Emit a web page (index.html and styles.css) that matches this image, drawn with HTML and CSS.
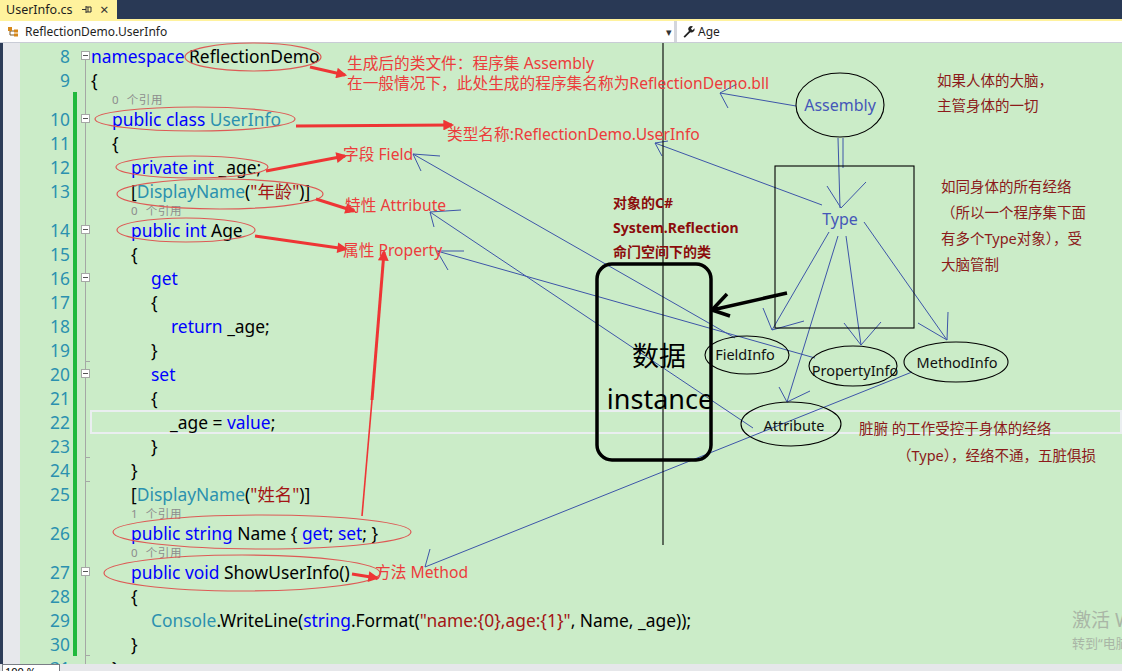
FILE: index.html
```html
<!DOCTYPE html>
<html lang="zh">
<head>
<meta charset="utf-8">
<title>UserInfo.cs</title>
<link rel="stylesheet" href="styles.css">
</head>
<body>
<div class="tabbar">
  <div class="tab">
    <span class="tabname">UserInfo.cs</span>
    <svg class="pin" width="11" height="9" viewBox="0 0 11 9"><path d="M0 4.5H4M4 1V8M4 2H9V7H4M6 2V7" fill="none" stroke="#333" stroke-width="1"/></svg>
    <span class="close">×</span>
  </div>
</div>
<div class="tabline"></div>
<div class="navbar">
  <div class="combo left">
    <svg class="clsicon" width="14" height="12" viewBox="0 0 14 12"><path d="M3 3V9H8M3 5H8" fill="none" stroke="#7a5a2a" stroke-width="1"/><rect x="1" y="1" width="4" height="4" fill="#d5871b"/><rect x="7" y="3.5" width="4" height="3" fill="#d5871b"/><rect x="7" y="7.5" width="4" height="3" fill="#d5871b"/></svg>
    <span class="combotext">ReflectionDemo.UserInfo</span>
    <span class="drop">▾</span>
  </div>
  <div class="combo right">
    <svg class="wrench" width="13" height="13" viewBox="0 0 13 13"><path d="M1.5 11.5L7 6A3 3 0 0 1 11 1.6L9 3.6L9.6 4.6L10.6 5.2L12.4 3.3A3.2 3.2 0 0 1 8.3 7.3L2.8 12.8Z" fill="#222"/></svg>
    <span class="combotext">Age</span>
  </div>
</div>

<div class="editor">
  <div class="strip"></div>
  <div class="glyphs"></div>
  <div class="lines">
    <div class="ln"><span class="num">8</span><span class="chg"></span><span class="ol first"><i class="box"></i></span><span class="code i0"><b class="kw">namespace</b> ReflectionDemo</span></div>
    <div class="ln"><span class="num">9</span><span class="chg"></span><span class="ol"></span><span class="code i0">{</span></div>
    <div class="lens"><span class="num"></span><span class="chg on"></span><span class="ol"></span><span class="code i1">0 个引用</span></div>
    <div class="ln"><span class="num">10</span><span class="chg on"></span><span class="ol"><i class="box"></i></span><span class="code i1"><b class="kw">public class</b> <b class="ty">UserInfo</b></span></div>
    <div class="ln"><span class="num">11</span><span class="chg on"></span><span class="ol"></span><span class="code i1">{</span></div>
    <div class="ln"><span class="num">12</span><span class="chg on"></span><span class="ol"></span><span class="code i2"><b class="kw">private int</b> _age;</span></div>
    <div class="ln"><span class="num">13</span><span class="chg on"></span><span class="ol"></span><span class="code i2">[<b class="ty">DisplayName</b>(<b class="st">"年龄"</b>)]</span></div>
    <div class="lens"><span class="num"></span><span class="chg on"></span><span class="ol"></span><span class="code i2">0 个引用</span></div>
    <div class="ln"><span class="num">14</span><span class="chg on"></span><span class="ol"><i class="box"></i></span><span class="code i2"><b class="kw">public int</b> Age</span></div>
    <div class="ln"><span class="num">15</span><span class="chg on"></span><span class="ol"></span><span class="code i2">{</span></div>
    <div class="ln"><span class="num">16</span><span class="chg on"></span><span class="ol"><i class="box"></i></span><span class="code i3"><b class="kw">get</b></span></div>
    <div class="ln"><span class="num">17</span><span class="chg on"></span><span class="ol"></span><span class="code i3">{</span></div>
    <div class="ln"><span class="num">18</span><span class="chg on"></span><span class="ol"></span><span class="code i4"><b class="kw">return</b> _age;</span></div>
    <div class="ln"><span class="num">19</span><span class="chg on"></span><span class="ol end"></span><span class="code i3">}</span></div>
    <div class="ln"><span class="num">20</span><span class="chg on"></span><span class="ol"><i class="box"></i></span><span class="code i3"><b class="kw">set</b></span></div>
    <div class="ln"><span class="num">21</span><span class="chg on"></span><span class="ol"></span><span class="code i3">{</span></div>
    <div class="ln cur"><span class="num">22</span><span class="chg on"></span><span class="ol"></span><span class="code i4">_age = <b class="kw">value</b>;</span></div>
    <div class="ln"><span class="num">23</span><span class="chg on"></span><span class="ol end"></span><span class="code i3">}</span></div>
    <div class="ln"><span class="num">24</span><span class="chg on"></span><span class="ol end"></span><span class="code i2">}</span></div>
    <div class="ln"><span class="num">25</span><span class="chg on"></span><span class="ol"></span><span class="code i2">[<b class="ty">DisplayName</b>(<b class="st">"姓名"</b>)]</span></div>
    <div class="lens"><span class="num"></span><span class="chg on"></span><span class="ol"></span><span class="code i2">1 个引用</span></div>
    <div class="ln"><span class="num">26</span><span class="chg on"></span><span class="ol"></span><span class="code i2"><b class="kw">public string</b> Name { <b class="kw">get</b>; <b class="kw">set</b>; }</span></div>
    <div class="lens"><span class="num"></span><span class="chg on"></span><span class="ol"></span><span class="code i2">0 个引用</span></div>
    <div class="ln"><span class="num">27</span><span class="chg on"></span><span class="ol"><i class="box"></i></span><span class="code i2"><b class="kw">public void</b> ShowUserInfo()</span></div>
    <div class="ln"><span class="num">28</span><span class="chg on"></span><span class="ol"></span><span class="code i2">{</span></div>
    <div class="ln"><span class="num">29</span><span class="chg on"></span><span class="ol"></span><span class="code i3"><b class="ty">Console</b>.WriteLine(<b class="kw">string</b>.Format(<b class="st">"name:{0},age:{1}"</b>, Name, _age));</span></div>
    <div class="ln"><span class="num">30</span><span class="chg on"></span><span class="ol end"></span><span class="code i2">}</span></div>
    <div class="ln"><span class="num">31</span><span class="chg"></span><span class="ol"></span><span class="code i1">}</span></div>
  </div>
</div>

<div class="statusbar"><span class="zoombox">100 %</span></div>

<svg class="overlay" width="1122" height="671" viewBox="0 0 1122 671">
  <defs>
    <marker id="rh" viewBox="0 0 10 10" refX="8" refY="5" markerWidth="4" markerHeight="3.6" orient="auto"><path d="M0,0 L10,5 L0,10 z" fill="#ee3535"/></marker>
  </defs>
  <g class="redell">
    <ellipse cx="253" cy="57" rx="68" ry="14"/>
    <ellipse cx="195" cy="119" rx="100" ry="12"/>
    <ellipse cx="192" cy="167" rx="76" ry="11"/>
    <ellipse cx="220" cy="194" rx="103" ry="15"/>
    <ellipse cx="186" cy="230" rx="69" ry="12"/>
    <ellipse cx="262" cy="532" rx="149" ry="17"/>
    <ellipse cx="242" cy="573" rx="138" ry="18"/>
  </g>
  <g class="redarrow">
    <path d="M310,67 L345,75" marker-end="url(#rh)"/>
    <path d="M296,126 L452,125" marker-end="url(#rh)"/>
    <path d="M266,171 L345,156" marker-end="url(#rh)"/>
    <path d="M316,199 L354,211" marker-end="url(#rh)"/>
    <path d="M255,236 L346,249" marker-end="url(#rh)"/>
    <path class="thin" d="M362,516 L372,400"/>
    <path d="M372,400 L384,252" marker-end="url(#rh)"/>
    <path d="M352,574 L377,578" marker-end="url(#rh)"/>
  </g>
  <g class="blue">
    <path d="M796,106 L720,93 M737,84 L720,93 L728,108"/>
    <path d="M838,138 L840,208 M843,138 L843,168 M827,186 L841,208 L866,182"/>
    <path d="M822,205 L655,143 M668,141 L655,143 L662,156"/>
    <path d="M735,338 L413,154 M440,156 L413,154 L421,171"/>
    <path d="M753,428 L430,212 M461,210 L430,212 L434,227"/>
    <path d="M815,358 L437,251 M464,251 L437,251 L448,270"/>
    <path d="M912,372 L425,567 M430,549 L425,567"/>
    <path d="M829,232 L772,330 M763,308 L772,330 L804,321"/>
    <path d="M838,236 L787,402 M779,387 L787,402 L810,391"/>
    <path d="M846,236 L861,345 M844,323 L861,345 L881,322"/>
    <path d="M864,222 L947,340 M918,323 L947,340 L948,312"/>
  </g>
  <g class="blk">
    <path d="M663,43 L663,545"/>
    <rect x="775" y="166" width="139" height="162"/>
    <ellipse cx="840" cy="105" rx="44" ry="32"/>
    <ellipse cx="747" cy="355" rx="42" ry="19"/>
    <ellipse cx="853" cy="366" rx="44" ry="20"/>
    <ellipse cx="956" cy="362" rx="52" ry="20"/>
    <ellipse cx="791" cy="424" rx="50" ry="22"/>
  </g>
  <rect class="thick" x="597" y="264" width="114" height="196" rx="15"/>
  <path class="thick" d="M787,293 L712,310 M727,294 L712,310 L730,316"/>

  <text class="t-node blue-t" x="840" y="105">Assembly</text>
  <text class="t-node blue-t" x="840" y="219">Type</text>
  <text class="t-node" x="745" y="354">FieldInfo</text>
  <text class="t-node" x="855" y="370">PropertyInfo</text>
  <text class="t-node" x="957" y="362">MethodInfo</text>
  <text class="t-node" x="794" y="425">Attribute</text>
  <text class="t-big" x="659" y="355">数据</text>
  <text class="t-big" x="660" y="398">instance</text>

  <text class="t-red" x="347" y="63">生成后的类文件：程序集 Assembly</text>
  <text class="t-red" x="347" y="83">在一般情况下，此处生成的程序集名称为ReflectionDemo.bll</text>
  <text class="t-red" x="447" y="134">类型名称:ReflectionDemo.UserInfo</text>
  <text class="t-red" x="343" y="154">字段 Field</text>
  <text class="t-red" x="345" y="205">特性 Attribute</text>
  <text class="t-red" x="343" y="250">属性 Property</text>
  <text class="t-red" x="375" y="572">方法 Method</text>

  <text class="t-bold" x="613" y="202">对象的C#</text>
  <text class="t-bold" x="613" y="227">System.Reflection</text>
  <text class="t-bold" x="613" y="251">命门空间下的类</text>

  <text class="t-dark" x="937" y="80">如果人体的大脑，</text>
  <text class="t-dark" x="937" y="105">主管身体的一切</text>
  <text class="t-dark" x="941" y="186">如同身体的所有经络</text>
  <text class="t-dark" x="941" y="212">（所以一个程序集下面</text>
  <text class="t-dark" x="941" y="238">有多个Type对象），受</text>
  <text class="t-dark" x="941" y="264">大脑管制</text>
  <text class="t-dark" x="859" y="428">脏腑 的工作受控于身体的经络</text>
  <text class="t-dark" x="897" y="455">（Type），经络不通，五脏俱损</text>

  <text class="t-wm1" x="1072" y="620">激活 Windows</text>
  <text class="t-wm2" x="1072" y="643">转到“电脑设置”以激活 Windows。</text>
</svg>
</body>
</html>
```
FILE: styles.css
```css
html, body {
  margin: 0;
  padding: 0;
}
body {
  width: 1122px;
  height: 671px;
  overflow: hidden;
  position: relative;
  background: #cbecc8;
  font-family: "Noto Sans", "Noto Sans CJK SC", sans-serif;
}
.tabbar {
  height: 19px;
  background: #293955;
  display: flex;
}
.tab {
  width: 117px;
  box-sizing: border-box;
  background: #fff29d;
  display: flex;
  align-items: center;
  padding-left: 6px;
  font-size: 12.5px;
  color: #1e1e1e;
}
.tabname { width: 76px; }
.pin { margin-right: 7px; }
.close { font-size: 15px; line-height: 1; color: #333; }
.tabline {
  height: 2px;
  background: #fff29d;
}
.navbar {
  height: 21px;
  background: #fff;
  border-bottom: 1px solid #c9ccd6;
  display: flex;
  font-size: 12px;
  color: #1e1e1e;
}
.combo {
  display: flex;
  align-items: center;
}
.combo.left {
  width: 677px;
  padding-left: 7px;
  box-sizing: border-box;
  border-right: 3px solid #d4d6dc;
}
.clsicon { margin-right: 4px; }
.combo.left .combotext { flex: 1; }
.drop { font-size: 11px; color: #333; margin-right: 2px; }
.combo.right { padding-left: 5px; }
.wrench { margin-right: 3px; }

.editor {
  height: 621px;
  display: flex;
  overflow: hidden;
}
.strip { width: 3px; background: #2d3c58; }
.glyphs { width: 17px; background: #e7e8ec; }
.lines { flex: 1; padding-top: 1px; }
.ln, .lens {
  display: grid;
  grid-template-columns: 50px 3px 4px 14px 1fr;
  height: 24px;
  align-items: stretch;
}
.lens { height: 15px; }
.num {
  grid-column: 1;
  text-align: right;
  color: #2b91af;
  font-size: 17.4px;
  line-height: 24px;
}
.chg { grid-column: 3; }
.chg.on { background: #20b93c; }
.ol {
  grid-column: 4;
  position: relative;
}
.ol::before {
  content: "";
  position: absolute;
  left: 8px;
  top: 0;
  bottom: 0;
  border-left: 1px solid #a5a8a5;
}
.ol.first::before { top: 12px; }
.ol.end::after {
  content: "";
  position: absolute;
  left: 8px;
  bottom: 0;
  width: 5px;
  border-top: 1px solid #a5a8a5;
}
.box {
  position: absolute;
  left: 4px;
  top: 7px;
  width: 7px;
  height: 7px;
  border: 1px solid #a5a8a5;
  background: #fff;
  z-index: 1;
}
.box::after {
  content: "";
  position: absolute;
  left: 1px;
  right: 1px;
  top: 3px;
  border-top: 1px solid #555;
}
.code {
  grid-column: 5;
  font-size: 17.4px;
  line-height: 24px;
  color: #000;
  white-space: pre;
}
.lens .code {
  font-size: 11.5px;
  line-height: 15px;
  color: #8d8d8d;
  word-spacing: 4px;
  letter-spacing: 0.6px;
}
.i0 { padding-left: 0; }
.i1 { padding-left: 21px; }
.i2 { padding-left: 40px; }
.i3 { padding-left: 60px; }
.i4 { padding-left: 80px; }
.kw, .ty, .st { font-weight: normal; }
.kw { color: #0000ff; }
.ty { color: #2b91af; }
.st { color: #a31515; }
.ln.cur .code {
  margin-left: -1px;
  box-shadow: inset 0 0 0 2px #eaeef0;
}

.statusbar {
  position: absolute;
  left: 0;
  right: 0;
  bottom: 0;
  height: 7px;
  background: #e6e7ea;
  overflow: hidden;
}
.zoombox {
  position: absolute;
  left: 2px;
  top: 0;
  width: 58px;
  height: 14px;
  background: #fff;
  border: 1px solid #7a7d85;
  font-size: 11px;
  line-height: 14px;
  padding-left: 2px;
  box-sizing: border-box;
}

.overlay {
  position: absolute;
  left: 0;
  top: 0;
  pointer-events: none;
}
.redell ellipse {
  fill: none;
  stroke: #dd5a55;
  stroke-width: 1.2;
}
.redarrow path {
  fill: none;
  stroke: #ee3535;
  stroke-width: 3;
}
.redarrow path.thin { stroke-width: 1.6; }
.blue path {
  fill: none;
  stroke: #3d55a8;
  stroke-width: 1;
}
.blk path, .blk rect, .blk ellipse {
  fill: none;
  stroke: #000;
  stroke-width: 1.1;
}
.thick {
  fill: none;
  stroke: #000;
  stroke-width: 3.5;
  stroke-linejoin: round;
}
.overlay text {
  font-family: "Noto Sans", "Noto Sans CJK SC", sans-serif;
  dominant-baseline: central;
}
.t-node {
  text-anchor: middle;
  font-size: 14.5px;
  fill: #111;
}
.blue-t { fill: #4557b8; font-size: 16px; }
.t-big {
  text-anchor: middle;
  font-size: 27px;
  fill: #000;
}
.t-red {
  font-size: 15.7px;
  fill: #ec3c3c;
}
.t-bold {
  font-size: 14px;
  font-weight: bold;
  fill: #8b0c0c;
}
.t-dark {
  font-size: 14.5px;
  fill: #8c1a1a;
}
.t-wm1 { font-size: 19px; fill: #a9b6a6; }
.t-wm2 { font-size: 13px; fill: #a9b6a6; }
```
